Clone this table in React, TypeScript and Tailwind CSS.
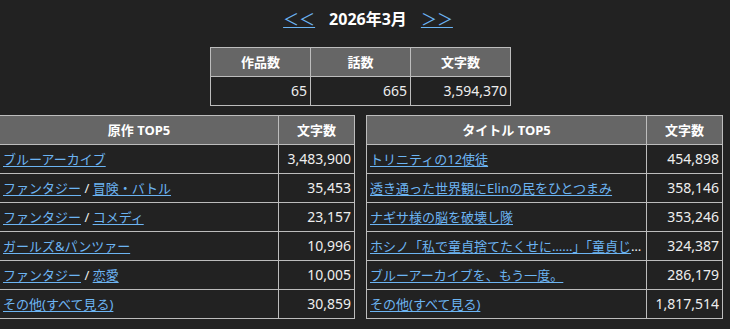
import React from "react"

type Row = { parts: string[]; count: string }

const sourceTop: Row[] = [
  { parts: ["ブルーアーカイブ"], count: "3,483,900" },
  { parts: ["ファンタジー", "冒険・バトル"], count: "35,453" },
  { parts: ["ファンタジー", "コメディ"], count: "23,157" },
  { parts: ["ガールズ&パンツァー"], count: "10,996" },
  { parts: ["ファンタジー", "恋愛"], count: "10,005" },
  { parts: ["その他(すべて見る)"], count: "30,859" },
]

const titleTop: Row[] = [
  { parts: ["トリニティの12使徒"], count: "454,898" },
  { parts: ["透き通った世界観にElinの民をひとつまみ"], count: "358,146" },
  { parts: ["ナギサ様の脳を破壊し隊"], count: "353,246" },
  { parts: ["ホシノ「私で童貞捨てたくせに……」「童貞じゃなかったの！？」"], count: "324,387" },
  { parts: ["ブルーアーカイブを、もう一度。"], count: "286,179" },
  { parts: ["その他(すべて見る)"], count: "1,817,514" },
]

const th = "border border-[#bdbdbd] bg-[#666666] text-center text-[13px] font-bold leading-[28px] text-white"
const td = "border border-[#bdbdbd] px-[3px] leading-[28px]"
const link = "text-[#6cb4f2] underline underline-offset-2"

const RankTable = ({ title, rows, width, first }: { title: string; rows: Row[]; width: string; first: string }) => (
  <table className={`${width} shrink-0 table-fixed border-collapse`}>
    <thead>
      <tr>
        <th className={`${th} ${first}`}>{title}</th>
        <th className={`${th} w-[76px]`}>文字数</th>
      </tr>
    </thead>
    <tbody>
      {rows.map((r, i) => (
        <tr key={i}>
          <td className={`${td} overflow-hidden text-ellipsis whitespace-nowrap text-[13px]`}>
            {r.parts.map((p, j) => (
              <React.Fragment key={j}>
                {j > 0 && <span className="text-[#eeeeee]"> / </span>}
                <a className={link} href="#">
                  {p}
                </a>
              </React.Fragment>
            ))}
          </td>
          <td className={`${td} text-right text-[14px] text-[#eeeeee]`}>{r.count}</td>
        </tr>
      ))}
    </tbody>
  </table>
)

export default function App() {
  return (
    <div
      className="min-h-screen w-full overflow-hidden bg-[#222222] text-[#eeeeee]"
      style={{ fontFamily: '"Noto Sans", "Noto Sans CJK JP", sans-serif' }}
    >
      {/* month nav */}
      <div className="flex items-center justify-center gap-[14px] pl-[6px] pt-[6px] text-[16px] leading-[26px]">
        <a className={link} href="#">
          ＜＜
        </a>
        <span className="font-bold text-white">2026年3月</span>
        <a className={link} href="#">
          ＞＞
        </a>
      </div>

      <div className="-ml-px w-[723px]">
        {/* totals */}
        <table className="mx-auto mt-[15px] w-[301px] table-fixed border-collapse">
          <thead>
            <tr>
              <th className={th}>作品数</th>
              <th className={th}>話数</th>
              <th className={th}>文字数</th>
            </tr>
          </thead>
          <tbody>
            <tr>
              <td className={`${td} text-right text-[14px]`}>65</td>
              <td className={`${td} text-right text-[14px]`}>665</td>
              <td className={`${td} text-right text-[14px]`}>3,594,370</td>
            </tr>
          </tbody>
        </table>

        <div className="mt-[9px] flex items-start gap-[11px]">
          <RankTable title="原作 TOP5" rows={sourceTop} width="w-[355px]" first="w-[279px]" />
          <RankTable title="タイトル TOP5" rows={titleTop} width="w-[356px]" first="w-[280px]" />
        </div>
      </div>
    </div>
  )
}
